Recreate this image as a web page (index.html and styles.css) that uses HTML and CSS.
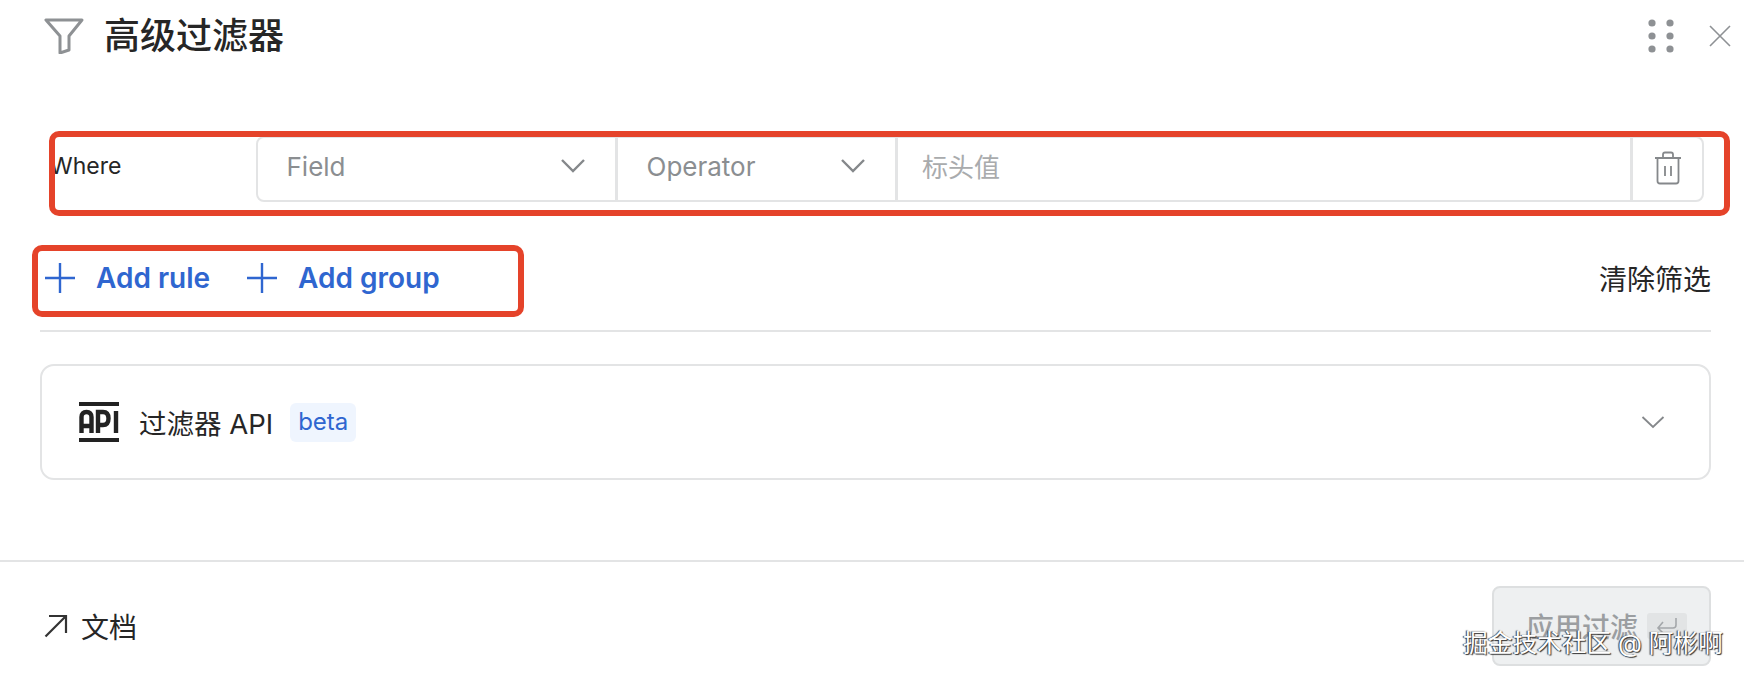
FILE: index.html
```html
<!DOCTYPE html>
<html lang="zh-CN">
<head>
    <meta charset="UTF-8">
    <title>高级过滤器</title>
    <link rel="stylesheet" href="styles.css">
</head>
<body>
    <div class="panel">
        <header class="header">
            <svg class="icon-filter" width="40" height="36" viewBox="0 0 40 36" fill="none" stroke="#8e9194" stroke-width="3" stroke-linejoin="round">
                <path d="M2 2H38L25 18V32L16 35V18Z"/>
            </svg>
            <h1 class="title">高级过滤器</h1>
            <svg class="icon-grip" width="26" height="34" viewBox="0 0 26 34" fill="#8e9194">
                <circle cx="4" cy="4" r="3.6"/><circle cx="22" cy="4" r="3.6"/>
                <circle cx="4" cy="17" r="3.6"/><circle cx="22" cy="17" r="3.6"/>
                <circle cx="4" cy="30" r="3.6"/><circle cx="22" cy="30" r="3.6"/>
            </svg>
            <svg class="icon-close" width="22" height="22" viewBox="0 0 22 22" stroke="#8e9194" stroke-width="1.6">
                <path d="M1 1L21 21M21 1L1 21"/>
            </svg>
        </header>

        <div class="content">
            <div class="rule">
                <span class="rule-label">Where</span>
                <div class="rule-fields">
                    <div class="select select-field">
                        <span>Field</span>
                        <svg width="26" height="16" viewBox="0 0 26 16" fill="none" stroke="#85888b" stroke-width="2.4"><path d="M2 2L13 13L24 2"/></svg>
                    </div>
                    <div class="select select-operator">
                        <span>Operator</span>
                        <svg width="26" height="16" viewBox="0 0 26 16" fill="none" stroke="#85888b" stroke-width="2.4"><path d="M2 2L13 13L24 2"/></svg>
                    </div>
                    <div class="value">标头值</div>
                    <div class="delete">
                        <svg width="28" height="34" viewBox="0 0 28 34" fill="none" stroke="#85888b" stroke-width="1.8" stroke-linejoin="round">
                            <path d="M1 7H27M9 7V3.5Q9 1.5 11 1.5H17Q19 1.5 19 3.5V7"/>
                            <path d="M3.5 7V30Q3.5 32.5 6 32.5H22Q24.5 32.5 24.5 30V7"/>
                            <path d="M11 15V25M17 15V25"/>
                        </svg>
                    </div>
                </div>
            </div>

            <div class="actions">
                <a class="add-link add-rule">
                    <svg width="32" height="32" viewBox="0 0 32 32" stroke="#2f66d0" stroke-width="2.4"><path d="M16 1V31M1 16H31"/></svg>
                    Add rule
                </a>
                <a class="add-link">
                    <svg width="32" height="32" viewBox="0 0 32 32" stroke="#2f66d0" stroke-width="2.4"><path d="M16 1V31M1 16H31"/></svg>
                    Add group
                </a>
                <span class="clear">清除筛选</span>
            </div>

            <div class="api-card">
                <svg class="icon-api" width="40" height="40" viewBox="0 0 40 40">
                    <rect x="0" y="0" width="40" height="4" fill="#222"/>
                    <rect x="0" y="36" width="40" height="4" fill="#222"/>
                    <g fill="none" stroke="#222" stroke-width="4.4">
                        <path d="M2.5 31V15Q2.5 10 7.5 10T12.5 15V31M2.5 24H12.5"/>
                        <path d="M19 31V10H24Q29.5 10 29.5 16.5T24 23H19"/>
                        <path d="M37 9V31"/>
                    </g>
                </svg>
                <span class="api-name">过滤器 API</span>
                <span class="badge">beta</span>
                <svg class="api-chevron" width="24" height="14" viewBox="0 0 24 14" fill="none" stroke="#85888b" stroke-width="1.8"><path d="M1.5 2L12 12L22.5 2"/></svg>
            </div>
        </div>

        <footer class="footer">
            <a class="docs">
                <svg width="24" height="24" viewBox="0 0 24 24" fill="none" stroke="#333" stroke-width="2.2"><path d="M1.5 22.5L22 2M5 2H22V19"/></svg>
                文档
            </a>
            <button class="apply">
                应用过滤
                <span class="kbd">
                    <svg width="22" height="18" viewBox="0 0 22 18" fill="none" stroke="#a4a7aa" stroke-width="1.6"><path d="M20 1V8Q20 11 17 11H2M7 5L2 11L7 16"/></svg>
                </span>
            </button>
        </footer>

        <div class="mark mark-rule"></div>
        <div class="mark mark-actions"></div>
        <div class="watermark">掘金技术社区 @ 阿彬啊</div>
    </div>
</body>
</html>
```

FILE: styles.css
```css
* {
    box-sizing: border-box;
}

body {
    margin: 0;
    background: #fff;
    color: #262626;
    font-family: Inter, "Noto Sans CJK SC", sans-serif;
    overflow: hidden;
}

.panel {
    position: relative;
    width: 1744px;
    height: 678px;
    display: flex;
    flex-direction: column;
    background: #fff;
}

/* header */
.header {
    height: 72px;
    display: flex;
    align-items: center;
    padding: 0 13px 0 44px;
}

.icon-filter {
    flex: none;
}

.title {
    flex: 1;
    margin: 0 0 0 20px;
    font-size: 36px;
    font-weight: 500;
    line-height: 72px;
}

.icon-close {
    margin-left: 35px;
}

/* rule row */
.content {
    padding: 64px 33px 0 40px;
}

.rule {
    display: flex;
    height: 66px;
}

.rule-label {
    width: 216px;
    padding: 15px 0 0 10px;
    font-size: 23px;
    line-height: 30px;
}

.rule-fields {
    flex: 1;
    display: flex;
    margin-right: 7px;
    border: 2px solid #e3e4e5;
    border-radius: 8px;
    font-size: 26px;
    color: #8b8e91;
}

.select,
.value,
.delete {
    display: flex;
    align-items: center;
    padding-bottom: 6px;
    border-right: 3px solid #e3e4e5;
}

.select {
    justify-content: space-between;
    padding-left: 28.5px;
    padding-right: 30px;
}

.select-field {
    width: 360px;
}

.select-operator {
    width: 280px;
}

.select svg {
    margin-right: -1px;
}

.value {
    flex: 1;
    padding-left: 24px;
    padding-bottom: 8px;
    color: #a9abad;
}

.delete {
    width: 69px;
    justify-content: center;
    padding-bottom: 2px;
    border-right: 0;
}

/* add rule / group */
.actions {
    display: flex;
    align-items: center;
    height: 130px;
    padding: 24px 0 0 4px;
    border-bottom: 2px solid #e3e4e5;
}

.add-link {
    display: flex;
    align-items: center;
    gap: 20px;
    font-size: 28px;
    font-weight: 600;
    color: #2f66d0;
}

.add-rule {
    margin-right: 36px;
}

.clear {
    margin-left: auto;
    font-size: 28px;
}

/* api card */
.api-card {
    display: flex;
    align-items: center;
    height: 116px;
    margin-top: 32px;
    padding: 0 44px 0 37px;
    border: 2px solid #e3e4e5;
    border-radius: 14px;
}

.api-name {
    margin-left: 20px;
    font-size: 27.5px;
}

.badge {
    margin-left: 17px;
    padding: 0 8px;
    height: 39px;
    line-height: 38px;
    font-size: 24px;
    color: #2f66d0;
    background: #eff5fe;
    border-radius: 6px;
}

.api-chevron {
    margin-left: auto;
}

/* footer */
.footer {
    flex: 1;
    display: flex;
    align-items: center;
    justify-content: space-between;
    margin-top: 80px;
    padding: 11px 33px 0 44px;
    border-top: 2px solid #e3e4e5;
}

.docs {
    display: flex;
    align-items: center;
    gap: 13px;
    font-size: 28px;
}

.apply {
    display: flex;
    align-items: center;
    justify-content: center;
    gap: 9px;
    width: 219px;
    height: 80px;
    padding: 0 0 0 10px;
    border: 2px solid #dddfe0;
    border-radius: 8px;
    background: #eef0f1;
    color: #9b9ea1;
    font-family: inherit;
    font-size: 28px;
    font-weight: 500;
}

.kbd {
    display: flex;
    align-items: center;
    justify-content: center;
    width: 40px;
    height: 26px;
    background: #e2e4e5;
    border-radius: 3px;
}

/* annotations drawn on top of the screenshot */
.mark {
    position: absolute;
    border: 6px solid #e5432a;
    border-radius: 10px;
}

.mark-rule {
    left: 49px;
    top: 131px;
    width: 1681px;
    height: 85px;
}

.mark-actions {
    left: 32px;
    top: 245px;
    width: 492px;
    height: 72px;
}

.watermark {
    position: absolute;
    left: 1463px;
    top: 626px;
    font-size: 24.7px;
    line-height: 34px;
    color: #fff;
    text-shadow: 1px 1px 1px #333, -1px 0 1px #333;
}
```
